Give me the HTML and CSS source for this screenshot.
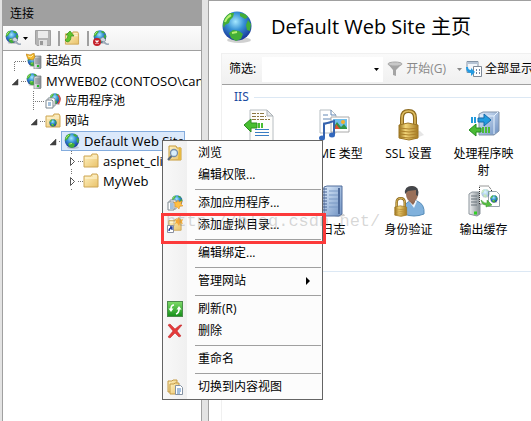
FILE: index.html
```html
<!DOCTYPE html>
<html lang="zh-CN">
<head>
<meta charset="utf-8">
<title>Default Web Site</title>
<link rel="stylesheet" href="styles.css">
</head>
<body>
<svg class="defs" aria-hidden="true">
  <defs>
    <radialGradient id="sea" cx=".45" cy=".35" r=".65"><stop offset="0" stop-color="#a5e8ff"/><stop offset=".45" stop-color="#3893d5"/><stop offset="1" stop-color="#17349a"/></radialGradient>
    <linearGradient id="fold" x2="1" y2="1"><stop offset="0" stop-color="#fff3c4"/><stop offset="1" stop-color="#e9c26a"/></linearGradient>
    <linearGradient id="gold"><stop offset="0" stop-color="#94701c"/><stop offset=".35" stop-color="#f4d77a"/><stop offset="1" stop-color="#a47a22"/></linearGradient>
    <linearGradient id="steel"><stop offset="0" stop-color="#f1f3f4"/><stop offset="1" stop-color="#848c91"/></linearGradient>
    <linearGradient id="blue" x2="1" y2="1"><stop offset="0" stop-color="#dceafa"/><stop offset="1" stop-color="#6d90c2"/></linearGradient>
    <linearGradient id="lime" y2="1" x2="0"><stop offset="0" stop-color="#7fdc6a"/><stop offset="1" stop-color="#149018"/></linearGradient>
  </defs>
  <symbol id="globe" viewBox="0 0 32 32">
    <ellipse cx="18" cy="29" rx="12" ry="3" fill="#777" opacity=".35"/>
    <circle cx="16" cy="15" r="14.500" fill="url(#sea)"/>
    <path d="M2 14Q2 6 9 2l4 0-1 4-3 3-1 3-4 2-1 3zM19 2l5 1 3 3-3 2-5-3zM27 9l3 4-1 7-3-1-1-5zM8 22l4-3 6 1 4 3-2 5-5 2-5-3z" fill="#43ae37"/>
    <path d="M4 11q2-5 6-7M11 22l5-1" stroke="#b7f071" stroke-width="2" fill="none"/>
  </symbol>
  <symbol id="server" viewBox="0 0 16 16">
    <path d="M8 4l2-1h5v12l-1 1H8z" fill="url(#steel)" stroke="#777d80" stroke-width=".7"/>
    <path d="M9 6h5M9 8h5M9 10h5" stroke="#7d868c"/><path d="M11 13h2" stroke="#24bd27" stroke-width="2"/>
  </symbol>
  <symbol id="home" viewBox="0 0 16 16">
    <use href="#globe" x="1" y="2" width="12" height="12"/><use href="#server" width="16" height="16"/>
    <path d="M0 1l4 1 4-2 1 4-2 3-5-1z" fill="#f3b72e" stroke="#b97c13" stroke-width=".6"/><path d="M2 3l3 1 2-2" stroke="#fff1a3" fill="none"/>
  </symbol>
  <symbol id="host" viewBox="0 0 16 16"><use href="#globe" width="13" height="13"/><use href="#server" width="16" height="16"/></symbol>
  <symbol id="pool" viewBox="0 0 16 16">
    <use href="#globe" x="4" width="12" height="12"/><path d="M13 2q4 4 0 9" stroke="#dd5145" stroke-width="1.500" fill="none"/>
    <path d="M3 5h6l1 1v7H3z" fill="#fff" stroke="#8d969d"/><path d="M1 7h6l1 1v7H1z" fill="#fff" stroke="#7d878e"/><path d="M3 10h3M3 12h3" stroke="#4982b9"/>
  </symbol>
  <symbol id="apps" viewBox="0 0 16 16">
    <use href="#globe" x="4" width="12" height="12"/><path d="M3 5h6v9H3z" fill="#fff" stroke="#8d969d"/><path d="M1 7h6v8H1z" fill="#fff" stroke="#7d878e"/><path d="M3 9h3M3 11h3M3 13h3" stroke="#4982b9"/>
    <path d="M11 5l1 2 3-1-1 3 2 2-3 0-1 3-2-2-2 0 0-3-1-2 3 0z" fill="#ffbf43" stroke="#e18c1c" stroke-width=".5"/>
  </symbol>
  <symbol id="folder" viewBox="0 0 16 16">
    <path d="M1 3h7l1-2h5l1 2v11H1z" fill="url(#fold)" stroke="#cda657"/><path d="M2 5h12M10 3h4" stroke="#fff8dd"/>
  </symbol>
  <symbol id="sites" viewBox="0 0 16 16"><use href="#folder" width="16" height="16"/><use href="#globe" x="4" y="6" width="8" height="8"/></symbol>
  <symbol id="connect" viewBox="0 0 16 16">
    <use href="#globe" width="14" height="14"/><path d="M7 9l3-2 3 3-2 2-3-1z" fill="#cbd5df" stroke="#7c8894" stroke-width=".7"/><path d="M11 11q1 4 5 3" fill="none" stroke="#9aa9b8" stroke-width="1.500"/>
  </symbol>
  <symbol id="disconnect" viewBox="0 0 16 16">
    <use href="#connect" width="16" height="16"/><circle cx="4" cy="12" r="4" fill="#c4202a"/><path d="M2.500 10.500l3 3m0-3l-3 3" stroke="#fff" stroke-width="1.300"/>
  </symbol>
  <symbol id="save" viewBox="0 0 16 16">
    <path d="M.5.5h15v15H2l-1.500-1.500z" fill="#b4b4b4" stroke="#a0a0a0"/><path d="M3 1h10v7H3z" fill="#ececec"/><path d="M4 10h8v6H4z" fill="#e2e2e2"/><path d="M5 11h3v4H5z" fill="#999"/>
  </symbol>
  <symbol id="up" viewBox="0 0 16 16">
    <use href="#folder" y="1" width="16" height="15"/><path d="M3 12q4 0 4-6h3L6 1 2 5h2q0 4-3 5z" fill="#60c52b" stroke="#348b1d" stroke-width=".7"/>
  </symbol>
  <symbol id="funnel" viewBox="0 0 16 16"><path d="M1 3l5 6v5l3 1V9l6-6z" fill="#a4a4a4"/><ellipse cx="8" cy="3" rx="7" ry="2" fill="#c8c8c8" stroke="#a8a8a8"/></symbol>
  <symbol id="showall" viewBox="0 0 16 16">
    <path d="M1 .5h11v11H1z" fill="#f2f6fb" stroke="#8795a6"/><path d="M1 2h11" stroke="#b6c4d5" stroke-width="2"/><path d="M7.500 5.500h8v10h-8z" fill="#fff" stroke="#7e8997"/><path d="M10 9h1m2 0h1m-4 3h1m2 0h1" stroke="#405d88" stroke-width="1.500"/><path d="M0 6q0 6 5 6v3l4-4-4-4v2q-3 0-3-3z" fill="#249be2"/>
  </symbol>
  <symbol id="browse" viewBox="0 0 16 16">
    <path d="M2 1h7l1 2h4v12H2z" fill="url(#fold)" stroke="#c89b38"/><path d="M12 2l2 1v12l-3-1z" fill="#e6b943"/><circle cx="7" cy="8" r="3.500" fill="#d9eefb" stroke="#778eaa" stroke-width="1.300"/><path d="M4.500 11L1 15" stroke="#59687a" stroke-width="2"/>
  </symbol>
  <symbol id="virtual" viewBox="0 0 16 16">
    <use href="#folder" y="1" width="16" height="14"/><path d="M12 0l1 3 3-1-1 3 1 2-3-1-1 3-2-3-2 1 1-3-2-2 3 1z" fill="#f5a937"/><path d="M.5 8.500h6v7h-6z" fill="#fff" stroke="#8b91a0"/><path d="M2 14q0-3 3-3M3 10h2v3" fill="none" stroke="#233f9e" stroke-width="1.300"/>
  </symbol>
  <symbol id="refresh" viewBox="0 0 16 16">
    <rect x=".5" y=".5" width="15" height="15" fill="url(#lime)" stroke="#4d8a4d"/>
    <path d="M7 4Q4 4 4 8M12 8q0 4-3 5" fill="none" stroke="#fff" stroke-width="1.600"/><path d="M1.500 7.500h5L4 11zM9.500 8.500h5L12 5z" fill="#fff"/>
  </symbol>
  <symbol id="delete" viewBox="0 0 16 16"><path d="M1 2l2-1 5 5 5-4 2 0-5 6 4 5-2 1-4-4-5 5-2-1 5-6z" fill="#e43a3a" stroke="#bb1d21" stroke-width=".5"/></symbol>
  <symbol id="content" viewBox="0 0 16 16">
    <path d="M1 13V2h4l1-1h4v12z" fill="url(#fold)" stroke="#c49a45"/><path d="M3 15V5h4l1-1h4v11z" fill="url(#fold)" stroke="#c49a45"/><path d="M8.500 6.500h5l2 2v7h-7z" fill="#fff" stroke="#8491a1"/><path d="M10 10h4m-4 2h4m-4 2h3" stroke="#477fbd"/>
  </symbol>
  <symbol id="headers" viewBox="0 0 32 32">
    <path d="M7 1h17l6 6v25H7z" fill="#fdfdfb" stroke="#b8bec2"/><path d="M24 1v6h6z" fill="#e5e8ea" stroke="#abb1b5"/>
    <path d="M9 4.500h13M9 7.500h14M9 10.500h18" stroke="#8c7742" stroke-dasharray="4 1 2 1"/><path d="M12 20.500h14M12 23.500h14M12 26.500h14" stroke="#397dc3"/>
    <path d="M1 16l7-6v4h6v5H8v4z" fill="#48be31" stroke="#2a8e20"/><path d="M16 14v5m3-5v5" stroke="#48be31" stroke-width="2"/>
  </symbol>
  <symbol id="mime" viewBox="0 0 32 32">
    <path d="M2 1h11l5 5v18H2z" fill="#fff" stroke="#b7bec3"/><path d="M13 1v5h5M5 6h5M5 10h8M5 14h7" fill="none" stroke="#6387b5"/>
    <path d="M13 8h18v15H13z" fill="#fff" stroke="#aaa"/><path d="M15 10h14v10H15z" fill="#6fbdea"/><path d="M15 19l4-6 4 5 3-3 3 4v1H15z" fill="#319548"/><circle cx="25" cy="13" r="2" fill="#f6b02c"/><path d="M18 15l4 5h-5z" fill="#e34e31"/>
    <path d="M6 29V15l10-3v14" fill="none" stroke="#3562ae" stroke-width="2"/><ellipse cx="4" cy="29" rx="3" ry="2.500" fill="#3268bd"/><ellipse cx="14" cy="26" rx="3" ry="2.500" fill="#3268bd"/>
  </symbol>
  <symbol id="lock" viewBox="0 0 32 32">
    <path d="M23 29l8-3-4-4-5-1z" fill="#aaa" opacity=".3"/><path d="M9 17V9q0-7 6.500-7T22 9v8" fill="none" stroke="#8d6b20" stroke-width="4"/><path d="M9 17V9q0-7 6.500-7T22 9v8" fill="none" stroke="#dfbd60" stroke-width="1.500"/>
    <path d="M6 16l9-2 10 2v13l-9 2-10-2z" fill="url(#gold)" stroke="#9d7624"/><path d="M6 19l10 1 9-1M6 22l10 1 9-1M6 25l10 1 9-1M6 28l10 1 9-1" fill="none" stroke="#ad812b"/>
  </symbol>
  <symbol id="handler" viewBox="0 0 32 32">
    <path d="M11 5l4-2h16v19l-5 4H11z" fill="url(#blue)" stroke="#8294aa"/><path d="M12 7h14v18M26 7l4-4" fill="none" stroke="#e7f4ff"/>
    <path d="M10 9h6V5l7 6-7 6v-4h-6z" fill="#219bde" stroke="#176ba9"/><path d="M4 8v6m3-6v6" stroke="#219bde" stroke-width="2"/>
    <path d="M8 15l-7 6 7 6v-4h5v-4H8z" fill="#4abb35" stroke="#248d20"/><path d="M15 18v6m3-6v6m3-6v6" stroke="#4abb35" stroke-width="2"/>
  </symbol>
  <symbol id="log" viewBox="0 0 32 32">
    <path d="M8 29h18l1 2-7 1z" fill="#888" opacity=".4"/><path d="M6 2l3-1h15v28l-3 2H6z" fill="url(#blue)" stroke="#536f9d"/><path d="M21 3v26" stroke="#4e6b9b" stroke-width="2"/>
    <path d="M11 6h9M11 10h9M11 14h9M11 18h9M11 22h9" stroke="#7898c4"/><path d="M4 4h5M4 7h5M4 10h5M4 13h5M4 16h5M4 19h5M4 22h5M4 25h5" stroke="#435f91"/>
  </symbol>
  <symbol id="auth" viewBox="0 0 32 32">
    <path d="M11 29q-1-13 8-13h5q8 3 7 13-10 4-20 0z" fill="#80b1dc" stroke="#568db9"/><path d="M16 16l5 7 3-7z" fill="#edf5fc"/><path d="M16 13h6v4l-2 3-4-4z" fill="#8d6551"/><ellipse cx="19" cy="9" rx="6" ry="8" fill="#9a7059"/><path d="M12 9q-1-8 7-8 8 0 6 10l-2-1V5l-8 1z" fill="#44464a"/>
    <use href="#lock" x="-2" y="12" width="20" height="20"/>
  </symbol>
  <symbol id="cache" viewBox="0 0 32 32">
    <path d="M1 9l3-2h8v22l-3 2-8-2z" fill="url(#steel)" stroke="#8b949b"/><path d="M3 11h6M3 14h6M3 17h6M3 20h6" stroke="#69727a"/><path d="M6 28h3" stroke="#30cf26" stroke-width="3"/>
    <path d="M11.500 1h9l3 4v14h-12z" fill="#fff" stroke="#333" stroke-dasharray="1 1"/><path d="M20.500 6.500h8l3 3v12h-11z" fill="#fff" stroke="#98a3ac"/><use href="#globe" x="13" y="4" width="9" height="9" opacity=".35"/><use href="#globe" x="22" y="10" width="8" height="8"/>
    <path d="M13 15q4 4 6 3v-3l5 5-6 2v-2q-4 0-5-5z" fill="#56bd41" stroke="#34942b" stroke-width=".5"/>
  </symbol>
  <symbol id="open" viewBox="0 0 19 20"><path d="M11 8v6H5z" fill="#404040" stroke="#404040" stroke-width=".5"/><path d="M14 10.500h5" stroke="#777" stroke-dasharray="1 1"/></symbol>
  <symbol id="shut" viewBox="0 0 19 20"><path d="M6.500 6.500v8l4-4z" fill="#fff" stroke="#555"/><path d="M14 10.500h5M7.500 0v3M7.500 18v2" stroke="#777" stroke-dasharray="1 1"/></symbol>
  <symbol id="first" viewBox="0 0 19 20"><path d="M7.500 20v-9.500H19" fill="none" stroke="#777" stroke-dasharray="1 1"/></symbol>
  <symbol id="branch" viewBox="0 0 19 20"><path d="M7.500 0v20M7 10.500h12" fill="none" stroke="#777" stroke-dasharray="1 1"/></symbol>
  <symbol id="down" viewBox="0 0 5 3"><path d="M0 0h5L2.500 3z" fill="currentColor"/></symbol>
</svg>

<div class="window">
  <aside class="connections">
    <h2 class="pane-title">连接</h2>
    <div class="tools">
      <button class="tool"><svg class="icon"><use href="#connect"/></svg><svg class="drop"><use href="#down"/></svg></button>
      <button class="tool" disabled><svg class="icon"><use href="#save"/></svg></button>
      <span class="divider"></span>
      <button class="tool"><svg class="icon"><use href="#up"/></svg></button>
      <span class="divider"></span>
      <button class="tool"><svg class="icon"><use href="#disconnect"/></svg></button>
    </div>
    <ul class="tree">
      <li><a class="node" href="#"><svg class="twist"><use href="#first"/></svg><span class="name"><svg class="icon"><use href="#home"/></svg>起始页</span></a></li>
      <li><a class="node" href="#"><svg class="twist"><use href="#open"/></svg><span class="name latin"><svg class="icon"><use href="#host"/></svg>MYWEB02 (CONTOSO\can</span></a>
        <ul>
          <li><a class="node" href="#"><svg class="twist"><use href="#branch"/></svg><span class="name"><svg class="icon"><use href="#pool"/></svg>应用程序池</span></a></li>
          <li><a class="node" href="#"><svg class="twist"><use href="#open"/></svg><span class="name"><svg class="icon"><use href="#sites"/></svg>网站</span></a>
            <ul>
              <li><a class="node" href="#"><svg class="twist"><use href="#open"/></svg><span class="name latin selected"><svg class="icon"><use href="#globe"/></svg>Default Web Site</span></a>
                <ul>
                  <li><a class="node" href="#"><svg class="twist"><use href="#shut"/></svg><span class="name latin"><svg class="icon"><use href="#folder"/></svg>aspnet_clie</span></a></li>
                  <li><a class="node" href="#"><svg class="twist"><use href="#shut"/></svg><span class="name latin"><svg class="icon"><use href="#folder"/></svg>MyWeb</span></a></li>
                </ul>
              </li>
            </ul>
          </li>
        </ul>
      </li>
    </ul>
  </aside>

  <main class="page">
    <header class="page-head"><svg class="emblem"><use href="#globe"/></svg><h1>Default Web Site 主页</h1></header>
    <div class="sheet">
      <div class="filter">
        <label for="filter">筛选:</label>
        <span class="combo"><select id="filter"><option></option></select><svg class="drop"><use href="#down"/></svg></span>
        <button class="action" disabled><svg class="icon"><use href="#funnel"/></svg>开始(G)<svg class="drop"><use href="#down"/></svg></button>
        <button class="action"><svg class="icon"><use href="#showall"/></svg>全部显示</button>
      </div>
      <section class="group">
        <h2 class="group-title">IIS</h2>
        <div class="tiles">
          <div class="tile"><svg class="picture"><use href="#headers"/></svg></div>
          <button class="tile"><svg class="picture"><use href="#mime"/></svg>MIME 类型</button>
          <button class="tile"><svg class="picture"><use href="#lock"/></svg>SSL 设置</button>
          <button class="tile"><svg class="picture"><use href="#handler"/></svg>处理程序映射</button>
          <button class="tile second"><svg class="picture"><use href="#log"/></svg>日志</button>
          <button class="tile"><svg class="picture"><use href="#auth"/></svg>身份验证</button>
          <button class="tile"><svg class="picture"><use href="#cache"/></svg>输出缓存</button>
        </div>
      </section>
    </div>
  </main>
</div>

<div class="menu" role="menu">
  <button class="item" role="menuitem"><svg class="icon"><use href="#browse"/></svg>浏览</button>
  <button class="item" role="menuitem"><span class="icon"></span>编辑权限...</button>
  <hr>
  <button class="item" role="menuitem"><svg class="icon"><use href="#apps"/></svg>添加应用程序...</button>
  <button class="item" role="menuitem"><svg class="icon"><use href="#virtual"/></svg>添加虚拟目录...</button>
  <hr>
  <button class="item" role="menuitem"><span class="icon"></span>编辑绑定...</button>
  <hr>
  <button class="item" role="menuitem"><span class="icon"></span>管理网站<svg class="more" viewBox="0 0 4 8"><path d="M0 0v8l4-4z"/></svg></button>
  <hr>
  <button class="item" role="menuitem"><svg class="icon"><use href="#refresh"/></svg>刷新(R)</button>
  <button class="item" role="menuitem"><svg class="icon"><use href="#delete"/></svg>删除</button>
  <hr>
  <button class="item" role="menuitem"><span class="icon"></span>重命名</button>
  <hr>
  <button class="item" role="menuitem"><svg class="icon"><use href="#content"/></svg>切换到内容视图</button>
</div>
<div class="watermark">http://blog.csdn.net/</div>
<div class="callout"></div>
</body>
</html>
```
FILE: styles.css
```css
* { box-sizing: border-box; }
body {
  margin: 0;
  overflow: hidden;
  background: #e3e3e3;
  color: #000;
  font: 12px/16px "Open Sans", "Noto Sans CJK SC", sans-serif;
}
button, select { margin: 0; padding: 0; border: 0; background: none; color: inherit; font: inherit; }
h1, h2, ul { margin: 0; padding: 0; font-weight: 400; }
ul { list-style: none; }
svg { display: block; flex: none; }
.defs { position: absolute; width: 0; height: 0; }
.icon { width: 16px; height: 16px; flex: none; }
.drop { width: 5px; height: 3px; }

.window {
  display: grid;
  grid-template-columns: 200px minmax(0, 1fr);
  gap: 6px;
  min-height: 100vh;
  padding-left: 2px;
}
.connections { overflow: hidden; border: solid #a0a0a0; border-width: 0 1px; background: #fff; }
.pane-title { height: 26px; padding: 0 7px; background: #a0a0a0; font-size: 12px; line-height: 28px; }
.tools {
  display: flex;
  align-items: center;
  height: 25px;
  padding: 0 2px;
  border-bottom: 1px solid #a0a0a0;
  background: linear-gradient(#fcfcfc, #f0f0f0);
}
.tool { display: flex; align-items: center; gap: 2px; margin-right: 7px; }
.divider { width: 2px; height: 15px; margin-right: 4px; background: #a0a0a0; }
.tree ul { padding-left: 19px; }
.tree > li > .node { margin-left: 4px; }
.tree > li > ul { margin-left: 4px; }
.node { display: flex; align-items: center; height: 20px; color: inherit; text-decoration: none; white-space: nowrap; }
.twist { width: 19px; height: 20px; }
.name { display: flex; align-items: center; gap: 4px; height: 20px; }
.latin { font-size: 13px; }
.selected { margin-left: -3px; padding-left: 3px; background: #dbe9fb; outline: 1px solid #84acdd; outline-offset: -1px; }

.page { overflow: hidden; padding-left: 12px; border: solid #a0a0a0; border-width: 1px 0 0 1px; background: #fff; }
.page-head { display: flex; align-items: center; gap: 18px; height: 52px; }
.page-head h1 { font-size: 20px; line-height: 28px; white-space: nowrap; }
.emblem { width: 32px; height: 32px; }
.sheet { min-height: calc(100vh - 53px); border: solid #f0f0f0; border-width: 1px 0 0 1px; }
.filter {
  display: flex;
  align-items: center;
  height: 31px;
  padding-left: 7px;
  border-bottom: 1px solid #a0a0a0;
  background: linear-gradient(#fafafa, #f0f0f0);
  white-space: nowrap;
}
.combo { display: flex; flex: none; align-items: center; width: 121px; height: 25px; margin: 0 4px 0 6px; padding-right: 4px; background: #fff; }
.combo select { flex: 1; height: 25px; appearance: none; }
.action { display: flex; flex: none; align-items: center; gap: 3px; margin-right: 4px; }
.action:disabled { color: #8a8a8a; }
.action .drop { margin-left: 8px; }
.group { padding-bottom: 16px; border-bottom: 1px solid #dce8f4; }
.group-title { display: flex; align-items: center; gap: 5px; height: 24px; padding-left: 12px; color: #1e4ba0; font-family: "Noto Sans", sans-serif; font-size: 12px; }
.group-title::after { flex: 1; height: 1px; background: #dce8f4; content: ""; }
.tiles { display: grid; grid-template-columns: repeat(auto-fill, 75px); row-gap: 6px; }
.tile { display: flex; flex-direction: column; align-items: center; height: 70px; padding: 0 4px 0 2px; line-height: 17px; }
.picture { width: 32px; height: 32px; margin-bottom: 4px; }
.second { grid-column: 2; }

.menu {
  position: absolute;
  top: 140px;
  left: 162px;
  width: 161px;
  padding: 1px 1px 1px 0;
  border: 1px solid #646464;
  background: linear-gradient(90deg, #f8f8f8, #f0f0f0 24px, #fcfcfc 24px);
}
.item { display: flex; align-items: center; gap: 15px; width: 100%; height: 22px; padding: 0 11px 0 4px; text-align: left; white-space: nowrap; }
.more { width: 4px; height: 8px; margin-left: auto; }
.menu hr { height: 1px; margin: 3px 0 2px 32px; border: 0; background: #a0a0a0; }
.watermark { position: absolute; top: 212px; left: 166px; color: #80808050; font: 17px/20px "Liberation Mono", monospace; pointer-events: none; }
.callout { position: absolute; top: 213px; left: 161px; width: 165px; height: 31px; border: 3px solid #fc3a3a; pointer-events: none; }
```
